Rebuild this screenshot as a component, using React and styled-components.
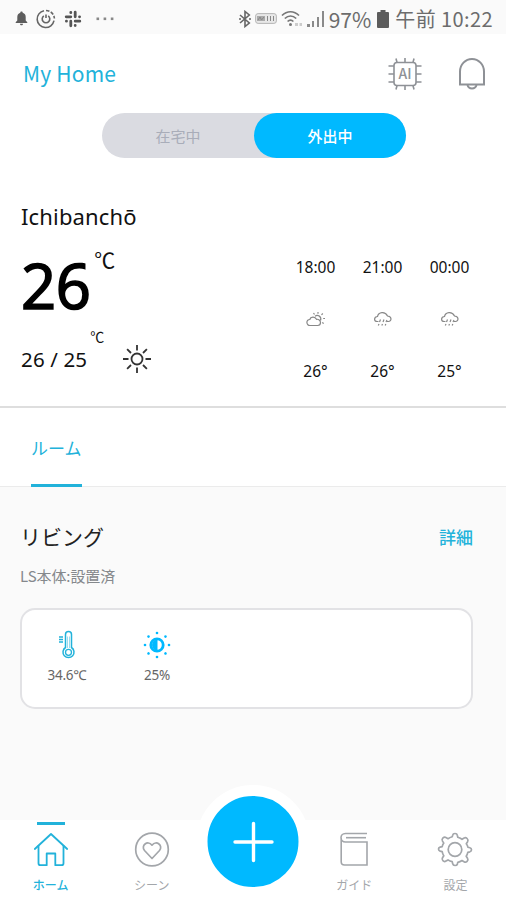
import styled, { createGlobalStyle } from "styled-components";

const blue = "#22b2da";
const brightBlue = "#00b9ff";
const gray = "#a3a6aa";

const GlobalStyle = createGlobalStyle`
    * {
        box-sizing: border-box;
    }

    body {
        margin: 0;
        background-color: #fff;
        font-family: "Noto Sans", "Noto Sans CJK JP", sans-serif;
    }

    svg {
        display: block;
        flex: none;
    }
`;

const Screen = styled.div`
    display: flex;
    flex-direction: column;
    width: 506px;
    height: 900px;
    overflow: hidden;
    background-color: #fff;
`;

const StatusBar = styled.div`
    display: flex;
    align-items: center;
    justify-content: space-between;
    height: 34px;
    padding: 3px 13px 0 15px;
    background-color: #fafafa;
`;

const StatusGroup = styled.div`
    display: flex;
    align-items: center;
    gap: ${(props) => props.$gap}px;
`;

const StatusText = styled.span`
    font-family: "Noto Sans CJK JP", sans-serif;
    font-size: ${(props) => props.$size || 20}px;
    font-weight: 400;
    line-height: 30px;
    letter-spacing: ${(props) => props.$spacing || 0}px;
    color: #6c6c6c;
`;

const Header = styled.header`
    display: flex;
    align-items: center;
    height: 79px;
    padding: 0 19px 0 23px;
    gap: 35px;
`;

const HomeTitle = styled.h1`
    flex: 1;
    margin: -2px 0 0;
    font-family: "Noto Sans CJK JP", sans-serif;
    font-size: 21px;
    font-weight: 400;
    letter-spacing: 0.2px;
    color: ${blue};
`;

const Toggle = styled.div`
    display: flex;
    align-self: center;
    width: 304px;
    height: 45px;
    margin-right: -2px;
    border-radius: 23px;
    background-color: #dadbe1;
`;

const ToggleOption = styled.button`
    width: 152px;
    height: 45px;
    padding: 0;
    border: none;
    border-radius: 23px;
    font-family: "Noto Sans CJK JP", sans-serif;
    font-size: 15px;
    font-weight: ${(props) => (props.$active ? 500 : 400)};
    color: ${(props) => (props.$active ? "#fff" : "#a9adb9")};
    background-color: ${(props) => (props.$active ? brightBlue : "transparent")};
`;

const Weather = styled.section`
    display: flex;
    justify-content: space-between;
    height: 250px;
    padding: 40px 23px 0 21px;
    border-bottom: 2px solid #dedede;
    color: #111;
`;

const City = styled.div`
    font-size: 22px;
    line-height: 36px;
    letter-spacing: 0.15px;
`;

const Reading = styled.div`
    display: flex;
    align-items: flex-start;
`;

// The stroke gives a weight between regular and semibold
const Temperature = styled.span`
    font-family: "Open Sans", "Noto Sans", sans-serif;
    font-size: 61.5px;
    font-weight: 400;
    line-height: 62px;
    margin-top: 20px;
    letter-spacing: -0.5px;
    color: #000;
    -webkit-text-stroke: 1.7px #000;
`;

const Unit = styled.span`
    font-family: "Noto Sans CJK JP", sans-serif;
    font-size: ${(props) => props.$size}px;
    line-height: 20px;
    margin: ${(props) => props.$margin};
`;

const Range = styled.span`
    font-size: 20.5px;
    line-height: 30px;
    margin-top: 28px;
    letter-spacing: 0.15px;
`;

const SunSlot = styled.div`
    margin: 28px 0 0 18px;
`;

const Forecast = styled.div`
    display: flex;
    padding-top: 55px;
`;

const Hour = styled.div`
    display: flex;
    flex-direction: column;
    align-items: center;
    width: 67px;
    font-size: 15.5px;
    line-height: 28px;

    svg {
        margin: 30px 0;
    }
`;

const Tabs = styled.nav`
    display: flex;
    height: 79px;
    padding-left: 31px;
    border-bottom: 1px solid #ebebeb;
`;

const Tab = styled.div`
    height: 79px;
    width: 51px;
    padding-top: 25px;
    border-bottom: 3px solid ${blue};
    font-family: "Noto Sans CJK JP", sans-serif;
    font-size: 17px;
    line-height: 30px;
    color: ${blue};
    white-space: nowrap;
`;

const Room = styled.section`
    flex: 1;
    padding: 31px 33px 0 20px;
    background-color: #fafafa;
`;

const RoomHead = styled.div`
    display: flex;
    align-items: center;
    justify-content: space-between;
    height: 36px;
`;

const RoomName = styled.h2`
    margin: 0;
    font-family: "Noto Sans CJK JP", sans-serif;
    font-size: 21px;
    font-weight: 400;
    color: #222;
`;

const DetailLink = styled.a`
    font-family: "Noto Sans CJK JP", sans-serif;
    font-size: 17px;
    font-weight: 500;
    color: ${blue};
`;

const RoomStatus = styled.p`
    margin: 10px 0 20px;
    font-family: "Noto Sans CJK JP", sans-serif;
    font-size: 15px;
    line-height: 24px;
    letter-spacing: -0.1px;
    color: #85888c;
`;

const SensorCard = styled.div`
    display: flex;
    height: 101px;
    padding: 20px 0 0;
    border: 2px solid #e2e2e5;
    border-radius: 15px;
    background-color: #fff;
`;

const Sensor = styled.div`
    display: flex;
    flex-direction: column;
    align-items: center;
    width: 90px;
    font-size: 13.5px;
    line-height: 20px;
    gap: 5px;
    letter-spacing: -0.2px;
    color: #666;
`;

const BottomNav = styled.nav`
    display: grid;
    grid-template-columns: repeat(5, 1fr);
    position: relative;
    height: 80px;
    background-color: #fff;
`;

const NavItem = styled.div`
    display: flex;
    flex-direction: column;
    align-items: center;
    font-family: "Noto Sans CJK JP", sans-serif;
    font-size: 12px;
    font-weight: ${(props) => (props.$active ? 500 : 400)};
    line-height: 18px;
    color: ${(props) => (props.$active ? blue : gray)};

    &::before {
        content: "";
        width: 28px;
        height: 3px;
        margin: 2px 0 6px;
        background-color: ${(props) => (props.$active ? blue : "transparent")};
    }
`;

const NavLabel = styled.span`
    margin-top: 9px;
`;

// Floats over the room list, with a white ring around it
const AddButton = styled.button`
    position: absolute;
    top: -35px;
    left: 50%;
    transform: translateX(-50%);
    display: flex;
    align-items: center;
    justify-content: center;
    width: 113px;
    height: 113px;
    padding: 0;
    border: 11px solid #fff;
    border-radius: 50%;
    color: #fff;
    background-color: ${brightBlue};
`;

const BellSmall = () => (
    <svg width="13" height="15" viewBox="0 0 13 15" fill="#5d5d5d">
        <path d="M6.5 0.5c.8 0 1.2.5 1.2 1.2C9.7 2.3 10.7 4 10.7 6v3.500l1.600 1.800v.7H.7v-.7l1.600-1.800V6c0-2 1-3.700 3-4.300C5.300 1 5.700.5 6.500.5zM5 12.800h3c0 2-3 2-3 0z" />
    </svg>
);

const TimerIcon = () => (
    <svg width="20" height="20" viewBox="0 0 20 20" fill="none" stroke="#666" strokeWidth="1.6">
        <path d="M8 1.7a8.500 8.500 0 1 0 10 10" />
        <path d="M10 1.5a8.500 8.500 0 0 1 8.400 8" strokeDasharray="3.5 1.5" />
        <path d="M7.800 6.800a3.800 3.800 0 1 0 4.400 0" />
        <path d="M10 5.500v3.500" />
    </svg>
);

const SlackIcon = () => (
    <svg width="18" height="18" viewBox="0 0 18 18" fill="none" stroke="#555" strokeWidth="2.8" strokeLinecap="round">
        <path d="M6.800 6.800H2.200M6.800 2.500v.2M11.200 6.800V2.200M15.500 6.800h.1M11.200 11.200h4.600M11.200 15.500v.1M6.800 11.200v4.600M2.500 11.200h-.1" />
    </svg>
);

const DotsIcon = () => (
    <svg width="25" height="4" viewBox="-6 0 25 4" fill="#888">
        <rect x="0.5" y="0.5" width="2.6" height="2.6" />
        <rect x="7.6" y="0.5" width="2.6" height="2.6" />
        <rect x="14.8" y="0.5" width="2.6" height="2.6" />
    </svg>
);

const BluetoothIcon = () => (
    <svg width="12" height="18" viewBox="0 0 12 18" fill="none" stroke="#666" strokeWidth="1.6">
        <path d="M1 5l9.300 8L6 16.500v-15L10.300 5 1 13" />
        <path d="M0 9h2M10 9h2" />
    </svg>
);

const BadgeIcon = () => (
    <svg width="22" height="11" viewBox="0 0 22 11">
        <rect x="0.6" y="0.6" width="20.8" height="9.8" rx="2.5" fill="#e8e8e8" stroke="#b5b5b5" />
        <path d="M2 3h8v5H2z" fill="#aaa" />
        <path d="M3 7l2-3 1.500 3L9 4M12.500 3v5M15.500 3v5M18.500 3v5" fill="none" stroke="#888" />
    </svg>
);

const WifiIcon = () => (
    <svg width="22" height="18" viewBox="0 0 22 18" fill="none" stroke="#777" strokeWidth="1.7">
        <path d="M1 5.500c5-5 12-5 17 0M3.800 8.500c3.500-3.300 8-3.300 11.400 0M6.600 11.500c1.800-1.800 4-1.800 5.800 0" />
        <circle cx="9.5" cy="14.5" r="1.5" fill="#777" stroke="none" />
        <path d="M14 14.500h3M18.500 14.500H21" stroke="#ccc" strokeWidth="3" />
    </svg>
);

const SignalIcon = () => (
    <svg width="18" height="18" viewBox="0 0 18 18" fill="#8a8a8a">
        <rect x="0" y="14" width="3" height="3" />
        <rect x="5" y="11" width="2" height="6" />
        <rect x="10" y="7" width="2" height="10" />
        <rect x="15" y="1" width="2" height="16" />
    </svg>
);

const BatteryIcon = () => (
    <svg width="12" height="18" viewBox="0 0 12 18" fill="#5c5c5c">
        <path d="M3.500 0h5v2H11a1 1 0 0 1 1 1v14a1 1 0 0 1-1 1H1a1 1 0 0 1-1-1V3a1 1 0 0 1 1-1h2.500z" />
    </svg>
);

const ChipLabel = styled.text`
    font-family: "Noto Sans CJK JP", sans-serif;
    font-size: 14px;
    font-weight: 500;
    fill: #8e9196;
`;

const ChipIcon = () => (
    <svg width="34" height="34" viewBox="0 0 34 34" fill="none" stroke="#8e9196" strokeWidth="1.6">
        <rect x="6" y="5.5" width="22" height="23" rx="3" />
        <path d="M8 1.500l1 4M17 1v4.500M26 1.500l-1 4M8 32.500l1-4M17 33v-4.500M26 32.500l-1-4" />
        <path d="M0.500 9H6M0.500 17H6M0.500 25H6M28 9h5.500M28 17h5.500M28 25h5.500" />
        <ChipLabel x="17" y="22" textAnchor="middle" stroke="none">AI</ChipLabel>
    </svg>
);

const BellIcon = () => (
    <svg width="30" height="34" viewBox="0 0 30 34" fill="none" stroke="#8e9196" strokeWidth="2">
        <path d="M3 27.500V14.500a12 12.500 0 0 1 24 0v13z" />
        <path d="M10.500 28c1 4.500 8 4.500 9 0" />
    </svg>
);

const SunIcon = () => (
    <svg width="30" height="30" viewBox="0 0 30 30" fill="none" stroke="#333" strokeWidth="1.8">
        <circle cx="15" cy="15" r="5.5" />
        <path d="M15 1v5.500M15 23.500V29M1 15h5.500M23.500 15H29M5.100 5.100l3.900 3.900M21 21l3.900 3.900M5.100 24.900L9 21M21 9l3.900-3.900" />
    </svg>
);

const CloudSunIcon = () => (
    <svg width="20" height="16" viewBox="0 0 20 16" fill="none" stroke="#888" strokeWidth="1.2">
        <path d="M4 14.500a3 3 0 0 1-.2-6C4.500 5.500 9 5 10.500 8.300c2-.3 4 1 4 3.200 0 1.800-1 3-2.800 3z" />
        <path d="M9 5.300c2.500-2.500 7 .5 5.500 4.200M12 1v1.700M7.500 2l1 1.500M16.800 2.500l-1.300 1.400M17.200 7.500H19M16.200 11.500l1.500 1" />
    </svg>
);

const RainIcon = () => (
    <svg width="20" height="16" viewBox="0 0 20 16" fill="none" stroke="#888" strokeWidth="1.2">
        <path d="M5.500 10.500H4.300C.8 10.500.5 6 4.500 5.500 5.500 1 12 0 14.500 5c4.500.2 4.500 5.500.8 5.500H14" />
        <path d="M7.500 8.500l-1 2.500M11 8.500l-1 2.500M14 9l-1 2M6 13l-.7 1.500M9.500 13l-.7 1.500M12.800 13l-.6 1.500" />
    </svg>
);

const ThermometerIcon = () => (
    <svg width="18" height="30" viewBox="0 0 18 30" fill="none" stroke={blue} strokeWidth="1.5">
        <path d="M7.500 17.500V4.500a3 3 0 0 1 6 0v13a5.500 5.500 0 1 1-6 0z" />
        <path d="M9.500 18V6.500M11.500 18V6.500" stroke="#9bdcef" strokeWidth="1" />
        <circle cx="10.5" cy="22.3" r="3" strokeWidth="1.3" />
        <path d="M1 7h4M1 9.500h4M1 12h4" strokeWidth="1.4" />
    </svg>
);

const BrightnessIcon = () => (
    <svg width="28" height="30" viewBox="0 0 28 30" fill={brightBlue}>
        <circle cx="14" cy="15" r="6.2" fill="#fff" stroke={brightBlue} strokeWidth="2.8" />
        <path d="M14.500 9.500v11a5.500 5.500 0 0 1 0-11z" />
        {[0, 45, 90, 135, 180, 225, 270, 315].map((angle) => (
            <circle key={angle} cx="14" cy="3" r="1.3" transform={`rotate(${angle} 14 15)`} />
        ))}
    </svg>
);

const HomeIcon = () => (
    <svg width="36" height="36" viewBox="0 0 36 36" fill="none" stroke="currentColor" strokeWidth="1.8" strokeLinejoin="round" strokeLinecap="round">
        <path d="M1.800 18L18 3l16.200 15" />
        <path d="M5.500 15v17.200a2 2 0 0 0 2 2h6.200V22.500h8.600v11.700h6.200a2 2 0 0 0 2-2V15" />
    </svg>
);

const SceneIcon = () => (
    <svg width="36" height="36" viewBox="0 0 36 36" fill="none" stroke="currentColor" strokeWidth="1.7">
        <circle cx="18" cy="18.5" r="16.3" />
        <path d="M18 27.500l-7.500-8c-4-4.500 3-11 7.500-5.300 4.500-5.700 11.500.8 7.500 5.300z" strokeLinejoin="round" />
    </svg>
);

const GuideIcon = () => (
    <svg width="36" height="36" viewBox="0 0 36 36" fill="none" stroke="currentColor" strokeWidth="1.6">
        <path d="M31 2.500H9.500C3.500 2.500 3.500 11 9.500 11H31v23H8.500a3.300 3.300 0 0 1-3.300-3.300V7" />
        <path d="M30 6.700H10" />
    </svg>
);

const SettingsIcon = () => (
    <svg width="36" height="36" viewBox="0 0 36 36" fill="none" stroke="currentColor" strokeWidth="1.7" strokeLinejoin="round">
        <circle cx="18" cy="18.5" r="6.8" />
        <path d="M15.700 4.200Q16 2.500 18 2.500t2.300 1.700l.5 2.100q3 .9 4.300 2l2-1.200q1.500-1 3 .4t.5 3.200l-1.300 2q1.300 1.700 1.600 3.500l2 .5q1.600.4 1.600 2t-1.600 2.100l-2.100.5q-.5 2.400-1.600 4l1.300 2q1 1.600-.4 3t-3.100.4l-2-1.200q-2 1.300-4.200 1.800l-.5 2.100Q19.900 34.500 18 34.500t-2.300-1.700l-.5-2.100q-2.300-.5-4.200-1.800l-2 1.200q-1.700 1-3.100-.4t-.4-3l1.300-2q-1.200-1.600-1.600-4l-2.100-.5q-1.600-.5-1.600-2.100t1.600-2l2.100-.5q.4-1.900 1.600-3.500l-1.300-2q-1-1.800.5-3.200t3-.4l2 1.200q1.700-1.200 4.200-2z" />
    </svg>
);

const PlusIcon = () => (
    <svg width="42" height="42" viewBox="0 0 42 42" stroke="currentColor" strokeWidth="3.4" strokeLinecap="round">
        <path d="M21 2.500v37M2.500 21h37" />
    </svg>
);

const hours = [
    { time: "18:00", icon: <CloudSunIcon />, temp: "26°" },
    { time: "21:00", icon: <RainIcon />, temp: "26°" },
    { time: "00:00", icon: <RainIcon />, temp: "25°" },
];

const App = () => (
    <>
        <GlobalStyle />
        <Screen>
            <StatusBar>
                <StatusGroup $gap={8}>
                    <BellSmall />
                    <TimerIcon />
                    <SlackIcon />
                    <DotsIcon />
                </StatusGroup>
                <StatusGroup $gap={6}>
                    <StatusGroup $gap={4}>
                        <BluetoothIcon />
                        <BadgeIcon />
                        <WifiIcon />
                        <SignalIcon />
                        <StatusText $size={21}>97%</StatusText>
                    </StatusGroup>
                    <BatteryIcon />
                    <StatusText $spacing={0.4}>午前 10:22</StatusText>
                </StatusGroup>
            </StatusBar>

            <Header>
                <HomeTitle>My Home</HomeTitle>
                <ChipIcon />
                <BellIcon />
            </Header>

            <Toggle>
                <ToggleOption>在宅中</ToggleOption>
                <ToggleOption $active>外出中</ToggleOption>
            </Toggle>

            <Weather>
                <div>
                    <City>Ichibanchō</City>
                    <Reading>
                        <Temperature>26</Temperature>
                        <Unit $size={21} $margin="15px 0 0 4px">℃</Unit>
                    </Reading>
                    <Reading>
                        <Range>26 / 25</Range>
                        <Unit $size={14} $margin="10px 0 0 3px">℃</Unit>
                        <SunSlot>
                            <SunIcon />
                        </SunSlot>
                    </Reading>
                </div>
                <Forecast>
                    {hours.map((hour) => (
                        <Hour key={hour.time}>
                            {hour.time}
                            {hour.icon}
                            {hour.temp}
                        </Hour>
                    ))}
                </Forecast>
            </Weather>

            <Tabs>
                <Tab>ルーム</Tab>
            </Tabs>

            <Room>
                <RoomHead>
                    <RoomName>リビング</RoomName>
                    <DetailLink>詳細</DetailLink>
                </RoomHead>
                <RoomStatus>LS本体:設置済</RoomStatus>
                <SensorCard>
                    <Sensor>
                        <ThermometerIcon />
                        34.6℃
                    </Sensor>
                    <Sensor>
                        <BrightnessIcon />
                        25%
                    </Sensor>
                </SensorCard>
            </Room>

            <BottomNav>
                <NavItem $active>
                    <HomeIcon />
                    <NavLabel>ホーム</NavLabel>
                </NavItem>
                <NavItem>
                    <SceneIcon />
                    <NavLabel>シーン</NavLabel>
                </NavItem>
                <span />
                <NavItem>
                    <GuideIcon />
                    <NavLabel>ガイド</NavLabel>
                </NavItem>
                <NavItem>
                    <SettingsIcon />
                    <NavLabel>設定</NavLabel>
                </NavItem>
                <AddButton>
                    <PlusIcon />
                </AddButton>
            </BottomNav>
        </Screen>
    </>
);

export default App;
